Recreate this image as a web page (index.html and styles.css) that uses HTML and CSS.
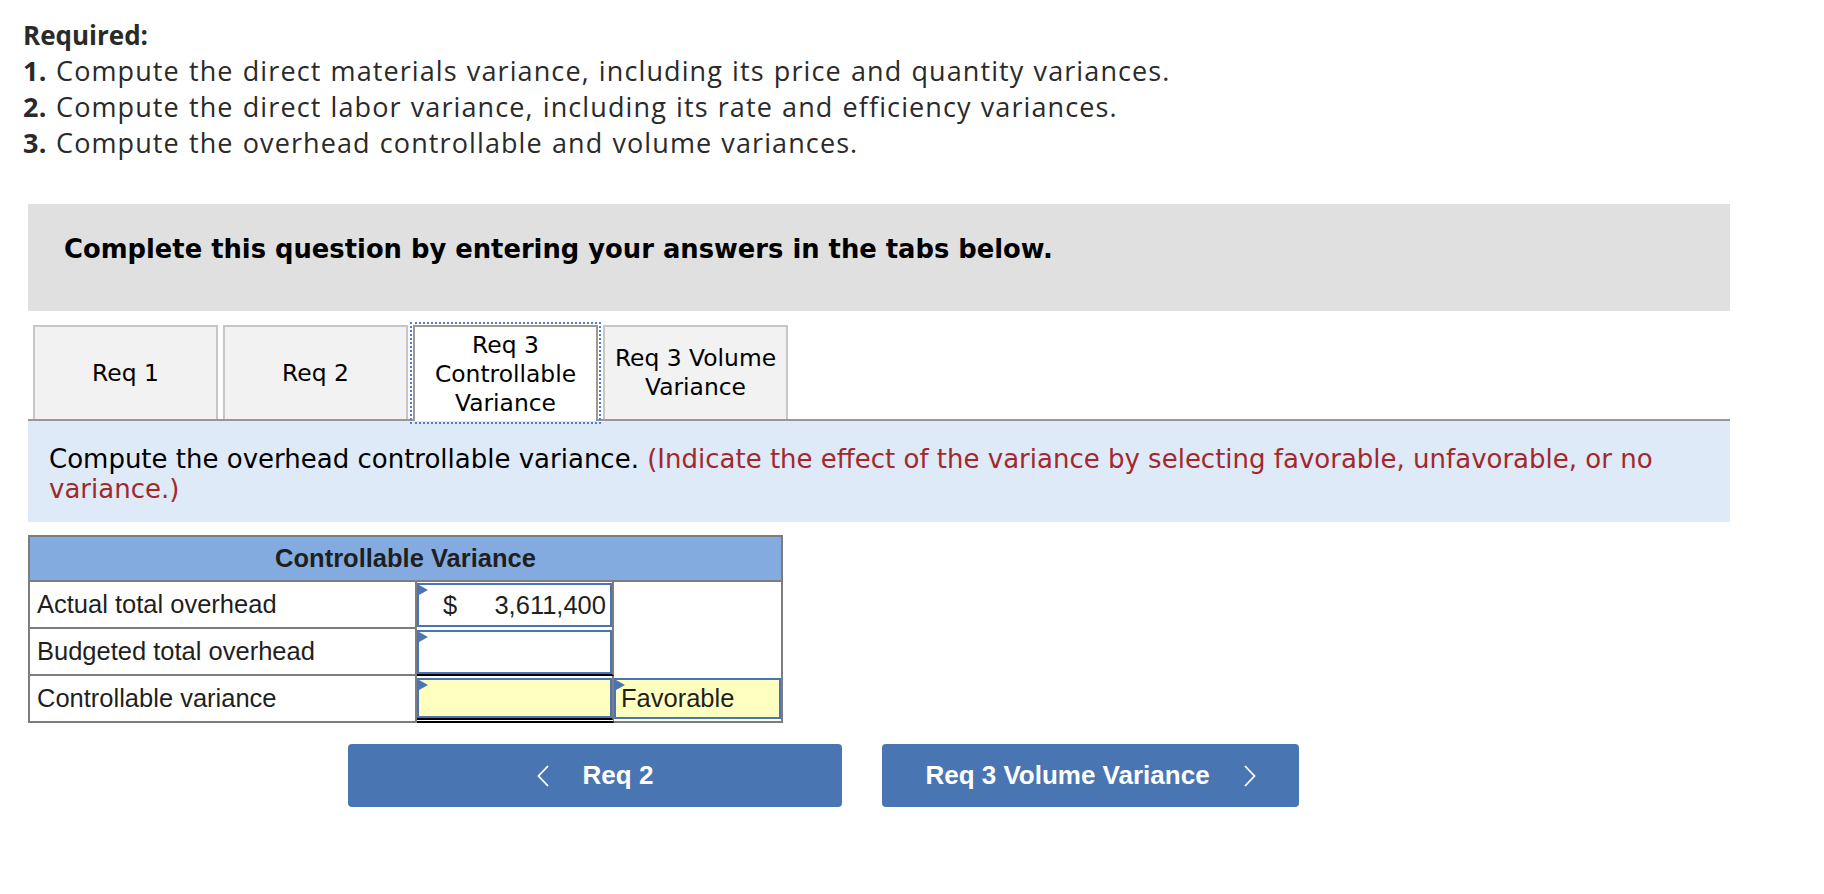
FILE: index.html
```html
<!DOCTYPE html>
<html lang="en">
<head>
<meta charset="utf-8">
<title>Controllable Variance</title>
<link rel="stylesheet" href="styles.css">
</head>
<body>
<div class="required">
  <p class="req-title">Required:</p>
  <p><b>1.</b> Compute the direct materials variance, including its price and quantity variances.</p>
  <p><b>2.</b> Compute the direct labor variance, including its rate and efficiency variances.</p>
  <p><b>3.</b> Compute the overhead controllable and volume variances.</p>
</div>

<div class="panel">
  <div class="notice">Complete this question by entering your answers in the tabs below.</div>

  <div class="tabs">
    <div class="tab">Req 1</div>
    <div class="tab">Req 2</div>
    <div class="tab active">Req 3<br>Controllable<br>Variance</div>
    <div class="tab">Req 3 Volume<br>Variance</div>
  </div>

  <div class="instr">Compute the overhead controllable variance. <span class="red">(Indicate the effect of the variance by selecting favorable, unfavorable, or no variance.)</span></div>

  <div class="vt">
    <div class="vt-head">Controllable Variance</div>
    <div class="vt-body">
      <div class="lbl r1">Actual total overhead</div>
      <div class="inp r1"><div class="box"><span class="cur">$</span><span class="num">3,611,400</span></div></div>
      <div class="blank"></div>

      <div class="lbl r2">Budgeted total overhead</div>
      <div class="inp r2"><div class="box"></div></div>

      <div class="lbl r3">Controllable variance</div>
      <div class="inp r3"><div class="box yellow"></div></div>
      <div class="fav"><div class="box yellow favbox">Favorable</div></div>
    </div>
  </div>

  <div class="nav">
    <div class="btn prev">
      <svg class="chev" width="12" height="22" viewBox="0 0 12 22"><path d="M11 1 L1.5 11 L11 21" fill="none" stroke="#fff" stroke-width="1.8"/></svg>
      <span>Req 2</span>
    </div>
    <div class="btn next">
      <span>Req 3 Volume Variance</span>
      <svg class="chev" width="12" height="22" viewBox="0 0 12 22"><path d="M1 1 L10.5 11 L1 21" fill="none" stroke="#fff" stroke-width="1.8"/></svg>
    </div>
  </div>
</div>
</body>
</html>
```

FILE: styles.css
```css
body {
  margin: 0;
  background: #fff;
}

.required {
  padding: 17px 0 0 23px;
  font-family: "Open Sans", "Lato", sans-serif;
  font-size: 27px;
  line-height: 36px;
  letter-spacing: 1.1px;
  word-spacing: 1px;
  color: #2a2a2a;
}
.required p {
  margin: 0;
}
.required b {
  letter-spacing: 0.4px;
}
.req-title {
  font-weight: 700;
  font-size: 26px;
  letter-spacing: 0;
}

.panel {
  margin: 43px 0 0 28px;
  width: 1702px;
}

.notice {
  box-sizing: border-box;
  height: 107px;
  padding: 30px 36px 0;
  background: #e0e0e0;
  font-family: "DejaVu Sans", Verdana, sans-serif;
  font-weight: 700;
  font-size: 25.8px;
  line-height: 30px;
  color: #000;
}

.tabs {
  display: flex;
  gap: 5px;
  margin-top: 14px;
  padding-left: 5px;
  border-bottom: 2px solid #979797;
  height: 94px;
}
.tab {
  box-sizing: border-box;
  width: 185px;
  height: 94px;
  border: 2px solid #c6c6c6;
  border-bottom: none;
  background: #f2f2f2;
  display: flex;
  align-items: center;
  justify-content: center;
  text-align: center;
  font-family: "DejaVu Sans", Verdana, sans-serif;
  font-size: 23.4px;
  line-height: 29px;
  color: #000;
}
.tab.active {
  background: #fff;
  border-color: #9a9a9a;
  height: 96px;
  margin-bottom: -2px;
  outline: 2px dotted #4d80d0;
  outline-offset: 1px;
  position: relative;
}

.instr {
  padding: 23px 21px 18px;
  background: #deeaf7;
  font-family: "DejaVu Sans", Verdana, sans-serif;
  font-size: 26px;
  line-height: 30px;
  color: #000;
}
.red {
  color: #a3282b;
}

.vt {
  width: 755px;
  box-sizing: border-box;
  margin-top: 13px;
  border: 2px solid #7d7d7d;
  font-family: "Liberation Sans", Arial, sans-serif;
  font-size: 25.5px;
  color: #1f1f1f;
}
.vt-head {
  height: 43px;
  line-height: 43px;
  background: #84abdf;
  border-bottom: 2px solid #7d7d7d;
  text-align: center;
  font-weight: 700;
}
.vt-body {
  display: grid;
  grid-template-columns: 387px 197px 167px;
  grid-template-rows: 47px 47px 45px;
}
.lbl {
  grid-column: 1;
  box-sizing: border-box;
  border-right: 2px solid #7d7d7d;
  padding-left: 7px;
  display: flex;
  align-items: center;
  white-space: nowrap;
}
.lbl.r1, .lbl.r2 {
  border-bottom: 2px solid #7d7d7d;
}
.r1 { grid-row: 1; }
.r2 { grid-row: 2; }
.r3 { grid-row: 3; }
.inp {
  grid-column: 2;
  box-sizing: border-box;
  border-right: 2px solid #7d7d7d;
  display: flex;
  flex-direction: column;
}
.inp.r1 {
  padding: 1px 0 2px;
}
.inp.r2 {
  padding-top: 1px;
  border-bottom: 2px solid #000;
}
.inp.r3 {
  padding-top: 2px;
  border-bottom: 5px double #000;
  margin-bottom: -2px;
}
.blank {
  grid-column: 3;
  grid-row: 1 / span 2;
  background: #fff;
}
.fav {
  grid-column: 3;
  grid-row: 3;
  padding-top: 2px;
}

.box {
  position: relative;
  box-sizing: border-box;
  flex: 1;
  border: 2px solid #4a74b4;
  background: #fff;
  display: flex;
  align-items: center;
}
.box::before {
  content: "";
  position: absolute;
  top: 0;
  left: 0;
  border-left: 9px solid #4a74b4;
  border-top: 5px solid transparent;
  border-bottom: 5px solid transparent;
}
.box.yellow {
  background: #ffffbf;
}
.favbox {
  height: 41px;
  padding-left: 5px;
}
.cur {
  margin-left: 24px;
}
.num {
  margin-left: auto;
  padding-right: 4px;
}

.nav {
  display: flex;
  gap: 40px;
  margin: 21px 0 0 320px;
}
.btn {
  height: 63px;
  border-radius: 4px;
  background: #4a75b3;
  color: #fff;
  display: flex;
  align-items: center;
  justify-content: center;
  gap: 34px;
  font-family: "Liberation Sans", Arial, sans-serif;
  font-weight: 700;
  font-size: 26px;
}
.btn.prev {
  width: 494px;
}
.btn.next {
  width: 417px;
}
.chev {
  display: block;
}
```
